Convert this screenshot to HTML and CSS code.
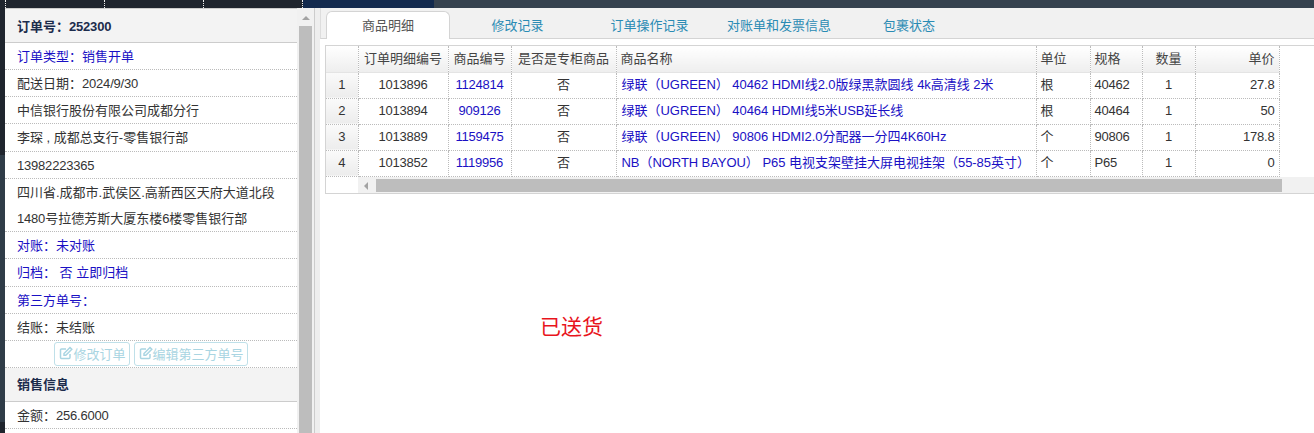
FILE: index.html
```html
<!DOCTYPE html>
<html lang="zh">
<head>
<meta charset="utf-8">
<title>订单详情</title>
<link rel="stylesheet" href="styles.css">
</head>
<body>
<header class="topbar">
  <div class="topbar-dark"><span class="tick"></span><span class="tick"></span><span class="tick"></span><span class="tick"></span></div>
  <div class="topbar-navy"></div>
  <div class="topbar-slate"></div>
</header>
<div class="main">
  <div class="edge"><div class="edge-a"></div><div class="edge-b"></div><div class="edge-c"></div></div>
  <aside class="side">
    <div class="side-list">
      <div class="side-head side-head-first">订单号：<span class="l">252300</span></div>
      <div class="row blue">订单类型：销售开单</div>
      <div class="row">配送日期：<span class="l">2024/9/30</span></div>
      <div class="row">中信银行股份有限公司成都分行</div>
      <div class="row row-tall">李琛 , 成都总支行-零售银行部</div>
      <div class="row"><span class="l">13982223365</span></div>
      <div class="row row-addr">四川省.成都市.武侯区.高新西区天府大道北段<br><span class="l">1480</span>号拉德芳斯大厦东楼<span class="l">6</span>楼零售银行部</div>
      <div class="row blue">对账：未对账</div>
      <div class="row row-tall blue">归档：&nbsp;否 立即归档</div>
      <div class="row blue">第三方单号：</div>
      <div class="row">结账：未结账</div>
      <div class="row-btns">
        <button class="btn"><svg class="ico" viewBox="0 0 14 14"><path d="M11 8v3.500a1 1 0 0 1-1 1H2.500a1 1 0 0 1-1-1V4a1 1 0 0 1 1-1H7" fill="none" stroke="currentColor" stroke-width="1.500"/><path d="M5 7.500 11 1.500l1.800 1.800-6 6H5z" fill="none" stroke="currentColor" stroke-width="1.500"/></svg>修改订单</button>
        <button class="btn"><svg class="ico" viewBox="0 0 14 14"><path d="M11 8v3.500a1 1 0 0 1-1 1H2.500a1 1 0 0 1-1-1V4a1 1 0 0 1 1-1H7" fill="none" stroke="currentColor" stroke-width="1.500"/><path d="M5 7.500 11 1.500l1.800 1.800-6 6H5z" fill="none" stroke="currentColor" stroke-width="1.500"/></svg>编辑第三方单号</button>
      </div>
      <div class="side-head">销售信息</div>
      <div class="row">金额：<span class="l">256.6000</span></div>
    </div>
    <div class="vscroll">
      <div class="vscroll-arrow"></div>
      <div class="vscroll-thumb"></div>
    </div>
  </aside>
  <div class="gutter"></div>
  <section class="content">
    <nav class="tabs">
      <div class="tab tab-on">商品明细</div>
      <div class="tab tab-2">修改记录</div>
      <div class="tab tab-3">订单操作记录</div>
      <div class="tab tab-4">对账单和发票信息</div>
      <div class="tab tab-5">包裹状态</div>
    </nav>
    <div class="grid-wrap">
      <table class="grid">
        <colgroup>
          <col class="c0"><col class="c1"><col class="c2"><col class="c3"><col class="c4"><col class="c5"><col class="c6"><col class="c7"><col class="c8">
        </colgroup>
        <thead>
          <tr><th></th><th class="ctr">订单明细编号</th><th class="ctr">商品编号</th><th class="ctr">是否是专柜商品</th><th class="lft">商品名称</th><th class="lft">单位</th><th class="lft">规格</th><th class="ctr">数量</th><th class="rgt">单价</th></tr>
        </thead>
        <tbody>
          <tr><td class="num"><span class="l">1</span></td><td class="ctr"><span class="l">1013896</span></td><td class="ctr blue"><span class="l">1124814</span></td><td class="ctr">否</td><td class="lft blue">绿联（<span class="l">UGREEN</span>） <span class="l">40462 HDMI</span>线<span class="l">2.0</span>版绿黑款圆线 <span class="l">4k</span>高清线 <span class="l">2</span>米</td><td class="lft">根</td><td class="lft"><span class="l">40462</span></td><td class="ctr"><span class="l">1</span></td><td class="rgt"><span class="l">27.8</span></td></tr>
          <tr><td class="num"><span class="l">2</span></td><td class="ctr"><span class="l">1013894</span></td><td class="ctr blue"><span class="l">909126</span></td><td class="ctr">否</td><td class="lft blue">绿联（<span class="l">UGREEN</span>） <span class="l">40464 HDMI</span>线<span class="l">5</span>米<span class="l">USB</span>延长线</td><td class="lft">根</td><td class="lft"><span class="l">40464</span></td><td class="ctr"><span class="l">1</span></td><td class="rgt"><span class="l">50</span></td></tr>
          <tr><td class="num"><span class="l">3</span></td><td class="ctr"><span class="l">1013889</span></td><td class="ctr blue"><span class="l">1159475</span></td><td class="ctr">否</td><td class="lft blue">绿联（<span class="l">UGREEN</span>） <span class="l">90806 HDMI2.0</span>分配器一分四<span class="l">4K60Hz</span></td><td class="lft">个</td><td class="lft"><span class="l">90806</span></td><td class="ctr"><span class="l">1</span></td><td class="rgt"><span class="l">178.8</span></td></tr>
          <tr><td class="num"><span class="l">4</span></td><td class="ctr"><span class="l">1013852</span></td><td class="ctr blue"><span class="l">1119956</span></td><td class="ctr">否</td><td class="lft blue"><span class="l">NB</span>（<span class="l">NORTH BAYOU</span>） <span class="l">P65</span> 电视支架壁挂大屏电视挂架（<span class="l">55-85</span>英寸）</td><td class="lft">个</td><td class="lft"><span class="l">P65</span></td><td class="ctr"><span class="l">1</span></td><td class="rgt"><span class="l">0</span></td></tr>
        </tbody>
      </table>
      <div class="hscroll">
        <div class="hscroll-pad"></div>
        <div class="hscroll-btn"></div>
        <div class="hscroll-thumb"></div>
      </div>
    </div>
    <div class="status">已送货</div>
  </section>
</div>
</body>
</html>
```
FILE: styles.css
```css
* { box-sizing: border-box; }
html, body { margin: 0; padding: 0; }
body {
  width: 1314px;
  height: 433px;
  overflow: hidden;
  background: #fff;
  font-family: "Liberation Sans", "Noto Sans CJK SC", sans-serif;
  font-size: 13px;
  color: #333;
}
.l { letter-spacing: -0.2px; }
.topbar { display: flex; height: 8px; }
.topbar-dark { width: 303px; padding-left: 5px; gap: 98px; background: #1f252e; display: flex; }
.tick { width: 1px; height: 8px; border-left: 1px dotted #eee; }
.topbar-navy { width: 131px; background: #132a4e; }
.topbar-slate { flex: 1; background: #36424f; }
.main { display: flex; height: 425px; }
.edge { width: 5px; display: flex; flex-direction: column; }
.edge-a { height: 147px; background: #1f252e; }
.edge-b { height: 267px; background: #2f3c48; }
.edge-c { flex: 1; background: #1f252e; }
.side { width: 309px; display: flex; background: #f1f1f1; }
.side-list { width: 292px; background: #fff; }
.side-head {
  height: 34px;
  line-height: 33px;
  padding-left: 12px;
  font-weight: bold;
  color: #1c2c4c;
  background: #f3f3f3;
  border-bottom: 1px solid #ccc;
}
.side-head-first { height: 35px; line-height: 35px; border-top: 1px solid #ccc; }
.row {
  height: 27px;
  line-height: 26px;
  padding: 1px 0 0 12px;
  border-bottom: 1px dotted #bbb;
  white-space: nowrap;
}
.row-tall { height: 28px; }
.row-addr { height: 53px; }
.blue { color: #1a10c4; }
.row-btns {
  height: 27px;
  padding-top: 1px;
  display: flex;
  justify-content: center;
  gap: 4px;
  border-bottom: 1px dotted #bbb;
}
.btn {
  height: 24px;
  padding: 0 3px 2px 4px;
  display: flex;
  align-items: center;
  font: inherit;
  color: #a9d5e2;
  background: #fff;
  border: 1px solid #bfe0e9;
  border-radius: 3px;
}
.ico { width: 14px; height: 14px; flex: none; }
.vscroll { width: 17px; background: #f1f1f1; padding-top: 8px; }
.vscroll-arrow {
  width: 0;
  height: 0;
  margin: 0 0 6px 5px;
  border-left: 4px solid transparent;
  border-right: 4px solid transparent;
  border-bottom: 4px solid #a3a3a3;
}
.vscroll-thumb { width: 13px; margin-left: 2px; height: 407px; background: #bdbdbd; }
.gutter { width: 6px; background: #eee; border-left: 1px solid #ccc; }
.content { flex: 1; position: relative; min-width: 0; }
.tabs {
  display: flex;
  height: 31px;
  padding: 3px 0 0 5px;
  background: #f1f1f1;
  border-bottom: 1px solid #d4d4d4;
  border-left: 1px solid #ddd;
}
.tab {
  height: 28px;
  line-height: 28px;
  text-align: center;
  color: #2a8bb4;
  border-top: 1px solid transparent;
}
.tab-on {
  width: 124px;
  color: #555;
  background: #fff;
  border: 1px solid #d4d4d4;
  border-bottom: 0;
  border-radius: 6px 6px 0 0;
}
.tab-2 { width: 135px; }
.tab-3 { width: 129px; }
.tab-4 { width: 130px; }
.tab-5 { width: 130px; }
.grid-wrap {
  margin: 6px 0 0 5px;
  border: 1px solid #d4d4d4;
  border-right: 0;
  background: #fff;
}
.grid { border-collapse: collapse; table-layout: fixed; width: 953px; }
.c0 { width: 32px; }
.c1 { width: 90px; }
.c2 { width: 63px; }
.c3 { width: 105px; }
.c4 { width: 420px; }
.c5 { width: 54px; }
.c6 { width: 52px; }
.c7 { width: 53px; }
.c8 { width: 84px; }
.grid th, .grid td {
  height: 26px;
  padding: 0 4px;
  line-height: 20px;
  font-weight: normal;
  white-space: nowrap;
  overflow: hidden;
  border-right: 1px dotted #bbb;
  border-bottom: 1px dotted #bbb;
}
.grid th { background: linear-gradient(#fff, #eee); color: #444; border-bottom: 1px solid #e4e4e4; }
.grid .num { text-align: center; background: linear-gradient(#fafafa, #ececec); }
.ctr { text-align: center; }
.lft { text-align: left; }
.rgt { text-align: right; }
.grid td.blue { color: #1a10c4; }
.grid td.lft.blue { padding-left: 5px; }
.grid td.lft.blue .l { letter-spacing: -0.07px; }
.hscroll { display: flex; height: 16px; padding-top: 2px; background: #f1f1f1; }
.hscroll-pad { width: 32px; background: #fff; margin-top: -2px; height: 16px; }
.hscroll-btn { width: 18px; position: relative; }
.hscroll-btn::before {
  content: "";
  position: absolute;
  left: 6px;
  top: 3px;
  border-top: 4px solid transparent;
  border-bottom: 4px solid transparent;
  border-right: 4px solid #a3a3a3;
}
.hscroll-thumb { width: 906px; height: 13px; background: #bdbdbd; }
.status {
  position: absolute;
  left: 220px;
  top: 302px;
  font-size: 21px;
  color: #e8141c;
}
```
